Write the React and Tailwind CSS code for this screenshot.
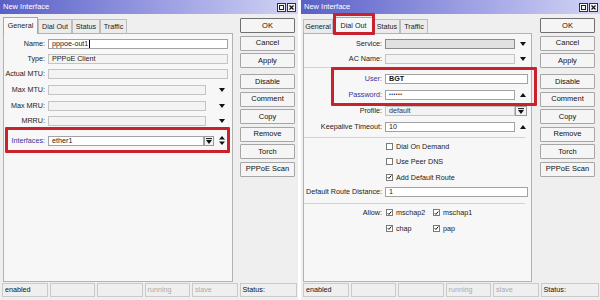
import React from "react";

const Down = () => (
  <svg width="6" height="4" viewBox="0 0 6 4">
    <path d="M0 0h6L3 4z" fill="#111" />
  </svg>
);

const Up = () => (
  <svg width="6" height="4" viewBox="0 0 6 4">
    <path d="M0 4h6L3 0z" fill="#111" />
  </svg>
);

const UpDown = () => (
  <svg width="6" height="9" viewBox="0 0 6 9">
    <path d="M0 3.5h6L3 0z M0 5.5h6L3 9z" fill="#111" />
  </svg>
);

// small combobox button: bar + down arrow
const BoxDown = ({ w = "w-[10px]" }) => (
  <div className={`${w} h-[10px] shrink-0 border border-[#9a9a9a] bg-[#f3f3f3] flex items-center justify-center`}>
    <svg width="6" height="6" viewBox="0 0 6 6">
      <path d="M0 0.6h6" stroke="#111" strokeWidth="1" />
      <path d="M0 2h6L3 6z" fill="#111" />
    </svg>
  </div>
);

const Check = () => (
  <svg width="6" height="6" viewBox="0 0 6 6">
    <path d="M0.8 3.2L2.3 4.7L5.2 1.2" stroke="#111" strokeWidth="1.2" fill="none" />
  </svg>
);

function Input({ children, tone = "white", className = "" }) {
  const tones = {
    white: "bg-white border-[#a2a2a2]",
    light: "bg-[#f3f3f3] border-[#c4c4c4]",
    dark: "bg-[#e1e1e1] border-[#8a8a8a]",
  };
  return (
    <div
      className={`h-[10px] flex-1 min-w-0 border ${tones[tone]} flex items-center pl-[3px] leading-none whitespace-nowrap ${className}`}
    >
      {children}
    </div>
  );
}

function Row({ label, lw, blue, mt, children }) {
  return (
    <div className={`flex items-center h-[11px] shrink-0 ${mt}`}>
      <div
        className={`${lw} shrink-0 text-right pr-[3px] whitespace-nowrap ${
          blue ? "text-[#35359a]" : "text-[#222]"
        }`}
      >
        {label}
      </div>
      <div className="flex-1 flex items-center h-full">{children}</div>
    </div>
  );
}

function ArrowCell({ w, pr = "pr-[3px]", children }) {
  return (
    <div className={`${w} ${pr} shrink-0 h-full flex items-center justify-end`}>
      {children}
    </div>
  );
}

function CheckBox({ checked, label }) {
  return (
    <div className="flex items-center gap-[3px]">
      <div className="w-[7px] h-[7px] border border-[#7a7a7a] bg-white flex items-center justify-center">
        {checked && <Check />}
      </div>
      <span className="text-[#222] whitespace-nowrap">{label}</span>
    </div>
  );
}

const Sep = ({ mt }) => <div className={`h-px bg-[#d2d2d2] mr-[3px] shrink-0 ${mt}`} />;

function TitleBar() {
  return (
    <div className="h-[14px] shrink-0 flex items-center justify-between pl-[3px] pr-[2px] bg-linear-to-r from-[#5a5fc6] via-[#9699e0] to-[#d3d4f4]">
      <span className="text-white text-[7.5px]">New Interface</span>
      <div className="flex gap-[1px]">
        <div className="w-[9px] h-[9px] border border-[#333] bg-[#f4f4f4] flex items-center justify-center">
          <div className="w-[5px] h-[5px] border border-[#222]" />
        </div>
        <div className="w-[9px] h-[9px] border border-[#333] bg-[#f4f4f4] flex items-center justify-center">
          <svg width="5" height="5" viewBox="0 0 5 5">
            <path d="M0.5 0.5L4.5 4.5M4.5 0.5L0.5 4.5" stroke="#111" strokeWidth="1.2" />
          </svg>
        </div>
      </div>
    </div>
  );
}

function Tabs({ items }) {
  return (
    <div className="h-[16px] shrink-0 flex items-end">
      {items.map(({ t, w, active }) => (
        <div
          key={t}
          className={`${w} ${
            active
              ? "h-[17px] -mb-px bg-[#f7f7f7] border-[#a8a8a8] relative z-10"
              : "h-[14px] bg-[#ebebeb] border-[#bdbdbd]"
          } border border-b-0 flex items-center justify-center text-[#222] whitespace-nowrap`}
        >
          {t}
        </div>
      ))}
    </div>
  );
}

function Buttons({ w }) {
  const first = ["OK", "Cancel", "Apply"];
  const second = ["Disable", "Comment", "Copy", "Remove", "Torch", "PPPoE Scan"];
  const btn = (t, extra = "") => (
    <div
      key={t}
      className={`h-[15px] shrink-0 border ${
        t === "OK" ? "border-[#707070]" : "border-[#a6a6a6]"
      } bg-[#f5f5f5] rounded-[1px] flex items-center justify-center text-[7.5px] text-[#111] ${extra}`}
    >
      {t}
    </div>
  );
  return (
    <div className={`${w} shrink-0 flex flex-col gap-[2.5px] pt-[4px]`}>
      {first.map((t) => btn(t))}
      {second.map((t, i) => btn(t, i === 0 ? "mt-[3.5px]" : ""))}
    </div>
  );
}

function StatusBar() {
  const cells = [
    ["enabled", "text-[#111]"],
    ["", ""],
    ["", ""],
    ["running", "text-[#ababab]"],
    ["slave", "text-[#ababab]"],
  ];
  return (
    <div className="mt-px h-[14px] shrink-0 flex gap-[2px] pl-[2px] pr-px">
      {cells.map(([t, c], i) => (
        <div
          key={i}
          className={`w-[45.5px] h-full border border-[#cacaca] flex items-center pl-[2px] ${c}`}
        >
          {t}
        </div>
      ))}
      <div className="flex-1 h-full border border-[#cacaca] flex items-center pl-[2px] text-[#111]">
        Status:
      </div>
    </div>
  );
}

function LeftPanel() {
  const lw = "w-[44px]";
  return (
    <div className="flex flex-col pr-[4px]">
      <Row label="Name:" lw={lw} mt="mt-[4px]">
        <Input>
          pppoe-out1
          <span className="w-px h-[8px] bg-black ml-px" />
        </Input>
      </Row>
      <Row label="Type:" lw={lw} mt="mt-[4px]">
        <Input tone="light">PPPoE Client</Input>
      </Row>
      <Row label="Actual MTU:" lw={lw} mt="mt-[4px]">
        <Input tone="light" />
      </Row>
      <Row label="Max MTU:" lw={lw} mt="mt-[5px]">
        <Input tone="light" />
        <ArrowCell w="w-[22px]">
          <Down />
        </ArrowCell>
      </Row>
      <Row label="Max MRU:" lw={lw} mt="mt-[5px]">
        <Input tone="light" />
        <ArrowCell w="w-[22px]">
          <Down />
        </ArrowCell>
      </Row>
      <Row label="MRRU:" lw={lw} mt="mt-[4px]">
        <Input tone="light" />
        <ArrowCell w="w-[22px]">
          <Down />
        </ArrowCell>
      </Row>
      <Row label="Interfaces:" lw={lw} blue mt="mt-[9px]">
        <Input>ether1</Input>
        <BoxDown />
        <ArrowCell w="w-[14px]">
          <UpDown />
        </ArrowCell>
      </Row>
    </div>
  );
}

function RightPanel() {
  const lw = "w-[81px]";
  return (
    <div className="flex flex-col pr-[3px]">
      <Row label="Service:" lw={lw} mt="mt-[4px]">
        <Input tone="dark" />
        <ArrowCell w="w-[13px]" pr="pr-[2px]">
          <Down />
        </ArrowCell>
      </Row>
      <Row label="AC Name:" lw={lw} mt="mt-[4px]">
        <Input tone="light" />
        <ArrowCell w="w-[13px]" pr="pr-[2px]">
          <Down />
        </ArrowCell>
      </Row>
      <Sep mt="mt-[3px]" />
      <Row label="User:" lw={lw} blue mt="mt-[5px]">
        <Input className="font-bold text-[#111]">BGT</Input>
      </Row>
      <Row label="Password:" lw={lw} blue mt="mt-[5px]">
        <Input className="text-[5px] tracking-[0.5px]">••••••</Input>
        <ArrowCell w="w-[13px]" pr="pr-[2px]">
          <Up />
        </ArrowCell>
      </Row>
      <Row label="Profile:" lw={lw} mt="mt-[5px]">
        <Input tone="light" className="text-[#333]">
          default
        </Input>
        <BoxDown w="w-[12px]" />
        <div className="w-px shrink-0" />
      </Row>
      <Row label="Keepalive Timeout:" lw={lw} mt="mt-[5px]">
        <Input>10</Input>
        <ArrowCell w="w-[13px]" pr="pr-[2px]">
          <Up />
        </ArrowCell>
      </Row>
      <Sep mt="mt-[5px]" />
      <Row label="" lw={lw} mt="mt-[3px]">
        <div className="pl-px">
          <CheckBox label="Dial On Demand" />
        </div>
      </Row>
      <Row label="" lw={lw} mt="mt-[4px]">
        <div className="pl-px">
          <CheckBox label="Use Peer DNS" />
        </div>
      </Row>
      <Row label="" lw={lw} mt="mt-[5px]">
        <div className="pl-px">
          <CheckBox checked label="Add Default Route" />
        </div>
      </Row>
      <Row label="Default Route Distance:" lw={lw} mt="mt-[3.5px]">
        <Input>1</Input>
      </Row>
      <Sep mt="mt-[5.5px]" />
      <Row label="Allow:" lw={lw} mt="mt-[3.5px]">
        <div className="pl-px flex">
          <div className="w-[47px]">
            <CheckBox checked label="mschap2" />
          </div>
          <CheckBox checked label="mschap1" />
        </div>
      </Row>
      <Row label="" lw={lw} mt="mt-[4.5px]">
        <div className="pl-px flex">
          <div className="w-[47px]">
            <CheckBox checked label="chap" />
          </div>
          <CheckBox checked label="pap" />
        </div>
      </Row>
    </div>
  );
}

function Window({ width, bodyPad, panelW, gap, btnW, tabs, children, overlays }) {
  return (
    <div className={`${width} h-[300px] shrink-0 relative flex flex-col bg-[#efefef]`}>
      <TitleBar />
      <div className={`flex-1 flex ${bodyPad} ${gap} min-h-0`}>
        <div className={`${panelW} shrink-0 flex flex-col pt-[3px]`}>
          <Tabs items={tabs} />
          <div className="flex-1 border border-[#b2b2b2] bg-[#f7f7f7]">{children}</div>
        </div>
        <Buttons w={btnW} />
      </div>
      <StatusBar />
      <div className="h-[3px] shrink-0" />
      {overlays}
    </div>
  );
}

export default function App() {
  return (
    <div className="w-[600px] h-[300px] bg-white flex gap-[3px] overflow-hidden font-['Liberation_Sans',Arial,sans-serif] text-[7.2px] leading-none text-[#222]">
      <Window
        width="w-[298px]"
        bodyPad="pl-[3px] pr-[3px]"
        panelW="w-[230px]"
        gap="gap-[7px]"
        btnW="w-[55px]"
        tabs={[
          { t: "General", w: "w-[35px]", active: true },
          { t: "Dial Out", w: "w-[34px]" },
          { t: "Status", w: "w-[28px]" },
          { t: "Traffic", w: "w-[27px]" },
        ]}
        overlays={
          <div className="absolute left-[5px] top-[127px] w-[225px] h-[26px] border-[3px] border-[#c8232d] rounded-[1px] pointer-events-none" />
        }
      >
        <LeftPanel />
      </Window>
      <Window
        width="w-[299px]"
        bodyPad="pl-[2px] pr-[5px]"
        panelW="w-[229px]"
        gap="gap-[8px]"
        btnW="w-[55px]"
        tabs={[
          { t: "General", w: "w-[30px]" },
          { t: "Dial Out", w: "w-[41px]", active: true },
          { t: "Status", w: "w-[26px]" },
          { t: "Traffic", w: "w-[28px]" },
        ]}
        overlays={
          <>
            <div className="absolute left-[32px] top-[13px] w-[42px] h-[22px] border-[3px] border-[#c8232d] rounded-[1px] z-20 pointer-events-none" />
            <div className="absolute left-[30px] top-[67px] w-[206px] h-[39px] border-[3px] border-[#c8232d] rounded-[1px] z-20 pointer-events-none" />
          </>
        }
      >
        <RightPanel />
      </Window>
    </div>
  );
}
